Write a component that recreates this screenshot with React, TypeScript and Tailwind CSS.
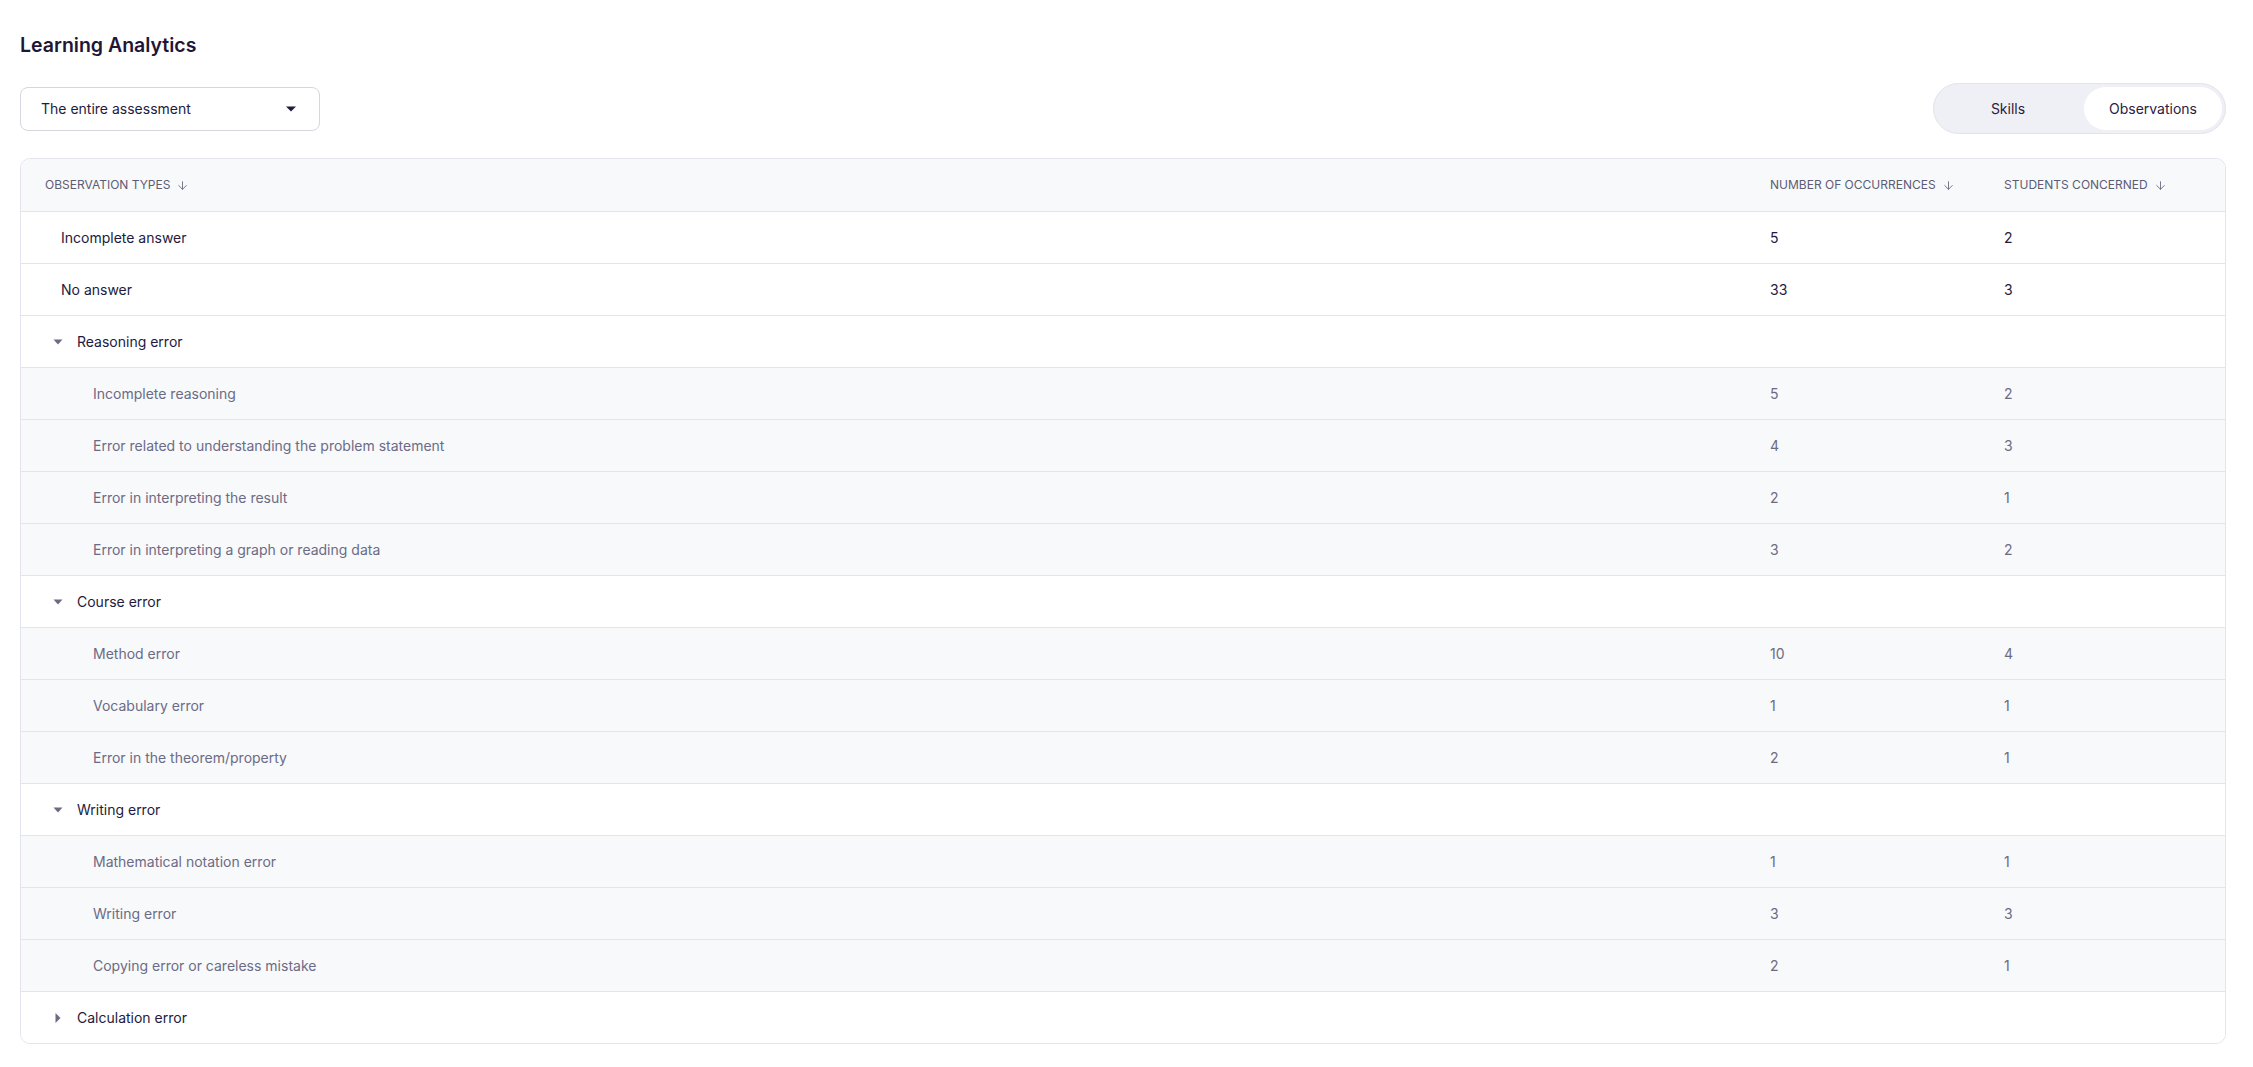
import React, { useState } from 'react';
import { ArrowDown } from 'lucide-react';

type Leaf = { label: string; occurrences: number; students: number };
type Group = { label: string; open: boolean; items: Leaf[] };
type Row = ({ kind: 'leaf' } & Leaf) | ({ kind: 'group' } & Group);

const rows: Row[] = [
  { kind: 'leaf', label: 'Incomplete answer', occurrences: 5, students: 2 },
  { kind: 'leaf', label: 'No answer', occurrences: 33, students: 3 },
  {
    kind: 'group',
    label: 'Reasoning error',
    open: true,
    items: [
      { label: 'Incomplete reasoning', occurrences: 5, students: 2 },
      { label: 'Error related to understanding the problem statement', occurrences: 4, students: 3 },
      { label: 'Error in interpreting the result', occurrences: 2, students: 1 },
      { label: 'Error in interpreting a graph or reading data', occurrences: 3, students: 2 },
    ],
  },
  {
    kind: 'group',
    label: 'Course error',
    open: true,
    items: [
      { label: 'Method error', occurrences: 10, students: 4 },
      { label: 'Vocabulary error', occurrences: 1, students: 1 },
      { label: 'Error in the theorem/property', occurrences: 2, students: 1 },
    ],
  },
  {
    kind: 'group',
    label: 'Writing error',
    open: true,
    items: [
      { label: 'Mathematical notation error', occurrences: 1, students: 1 },
      { label: 'Writing error', occurrences: 3, students: 3 },
      { label: 'Copying error or careless mistake', occurrences: 2, students: 1 },
    ],
  },
  { kind: 'group', label: 'Calculation error', open: false, items: [] },
];

const Caret: React.FC<{ open: boolean }> = ({ open }) => (
  <svg width="10" height="10" viewBox="0 0 10 10" className="text-[#6b6b85]">
    {open ? <path d="M0.5 2.5h9L5 7.5z" fill="currentColor" /> : <path d="M2.5 0v10L7.5 5z" fill="currentColor" />}
  </svg>
);

const HeaderCell: React.FC<{ label: string; className?: string }> = ({ label, className = '' }) => (
  <div className={`flex items-center gap-1.5 ${className}`}>
    <span>{label}</span>
    <ArrowDown size={13} strokeWidth={1.5} />
  </div>
);

const rowGrid = 'grid grid-cols-[1fr_234px_221px] h-[52px] items-center border-t border-[#e4e4ee]';

const App: React.FC = () => {
  const [tab, setTab] = useState<'skills' | 'observations'>('observations');

  return (
    <div className="min-h-screen bg-white pl-5 pr-[27px] pt-[31px] text-[#231a3d] font-['Inter',sans-serif]">
      <h1 className="text-[19.5px] leading-7 font-semibold text-[#1f1535]">Learning Analytics</h1>

      <div className="mt-6 flex items-center justify-between">
        <button className="flex h-[44px] w-[300px] items-center justify-between rounded-lg border border-[#d6d6e0] pl-[20px] pr-[23px] text-[14px] text-[#231a3d]">
          <span>The entire assessment</span>
          <svg width="10" height="6" viewBox="0 0 10 6">
            <path d="M0 0.5h10L5 5.5z" fill="#231a3d" />
          </svg>
        </button>

        <div className="flex h-[51px] items-center rounded-full border border-[#e2e3ec] bg-[#eff0f5] p-[3px] text-[14px] text-[#2a2142]">
          <button
            onClick={() => setTab('skills')}
            className={`h-[43px] w-[147px] rounded-full pr-[5px] ${tab === 'skills' ? 'bg-white' : ''}`}
          >
            Skills
          </button>
          <button
            onClick={() => setTab('observations')}
            className={`h-[43px] w-[138px] rounded-full ${tab === 'observations' ? 'bg-white' : ''}`}
          >
            Observations
          </button>
        </div>
      </div>

      <div className="mt-6 overflow-hidden rounded-[10px] border border-[#e4e4ee]">
        <div className="grid h-[52px] grid-cols-[1fr_234px_221px] items-center bg-[#f8f9fb] text-[12px] uppercase text-[#5c5c75]">
          <HeaderCell label="Observation types" className="pl-6" />
          <HeaderCell label="Number of occurrences" />
          <HeaderCell label="Students concerned" />
        </div>

        {rows.map((row) =>
          row.kind === 'leaf' ? (
            <div key={row.label} className={`${rowGrid} bg-white text-[14px] text-[#231a3d]`}>
              <div className="pl-10">{row.label}</div>
              <div>{row.occurrences}</div>
              <div>{row.students}</div>
            </div>
          ) : (
            <React.Fragment key={row.label}>
              <div className={`${rowGrid} bg-white text-[14px] text-[#231a3d]`}>
                <div className="flex items-center gap-[14px] pl-[32px]">
                  <Caret open={row.open} />
                  <span>{row.label}</span>
                </div>
                <div />
                <div />
              </div>
              {row.open &&
                row.items.map((item) => (
                  <div key={item.label} className={`${rowGrid} bg-[#f8f9fb] text-[14px] text-[#6b6b85]`}>
                    <div className="pl-[72px]">{item.label}</div>
                    <div>{item.occurrences}</div>
                    <div>{item.students}</div>
                  </div>
                ))}
            </React.Fragment>
          )
        )}
      </div>
    </div>
  );
};

export default App;
